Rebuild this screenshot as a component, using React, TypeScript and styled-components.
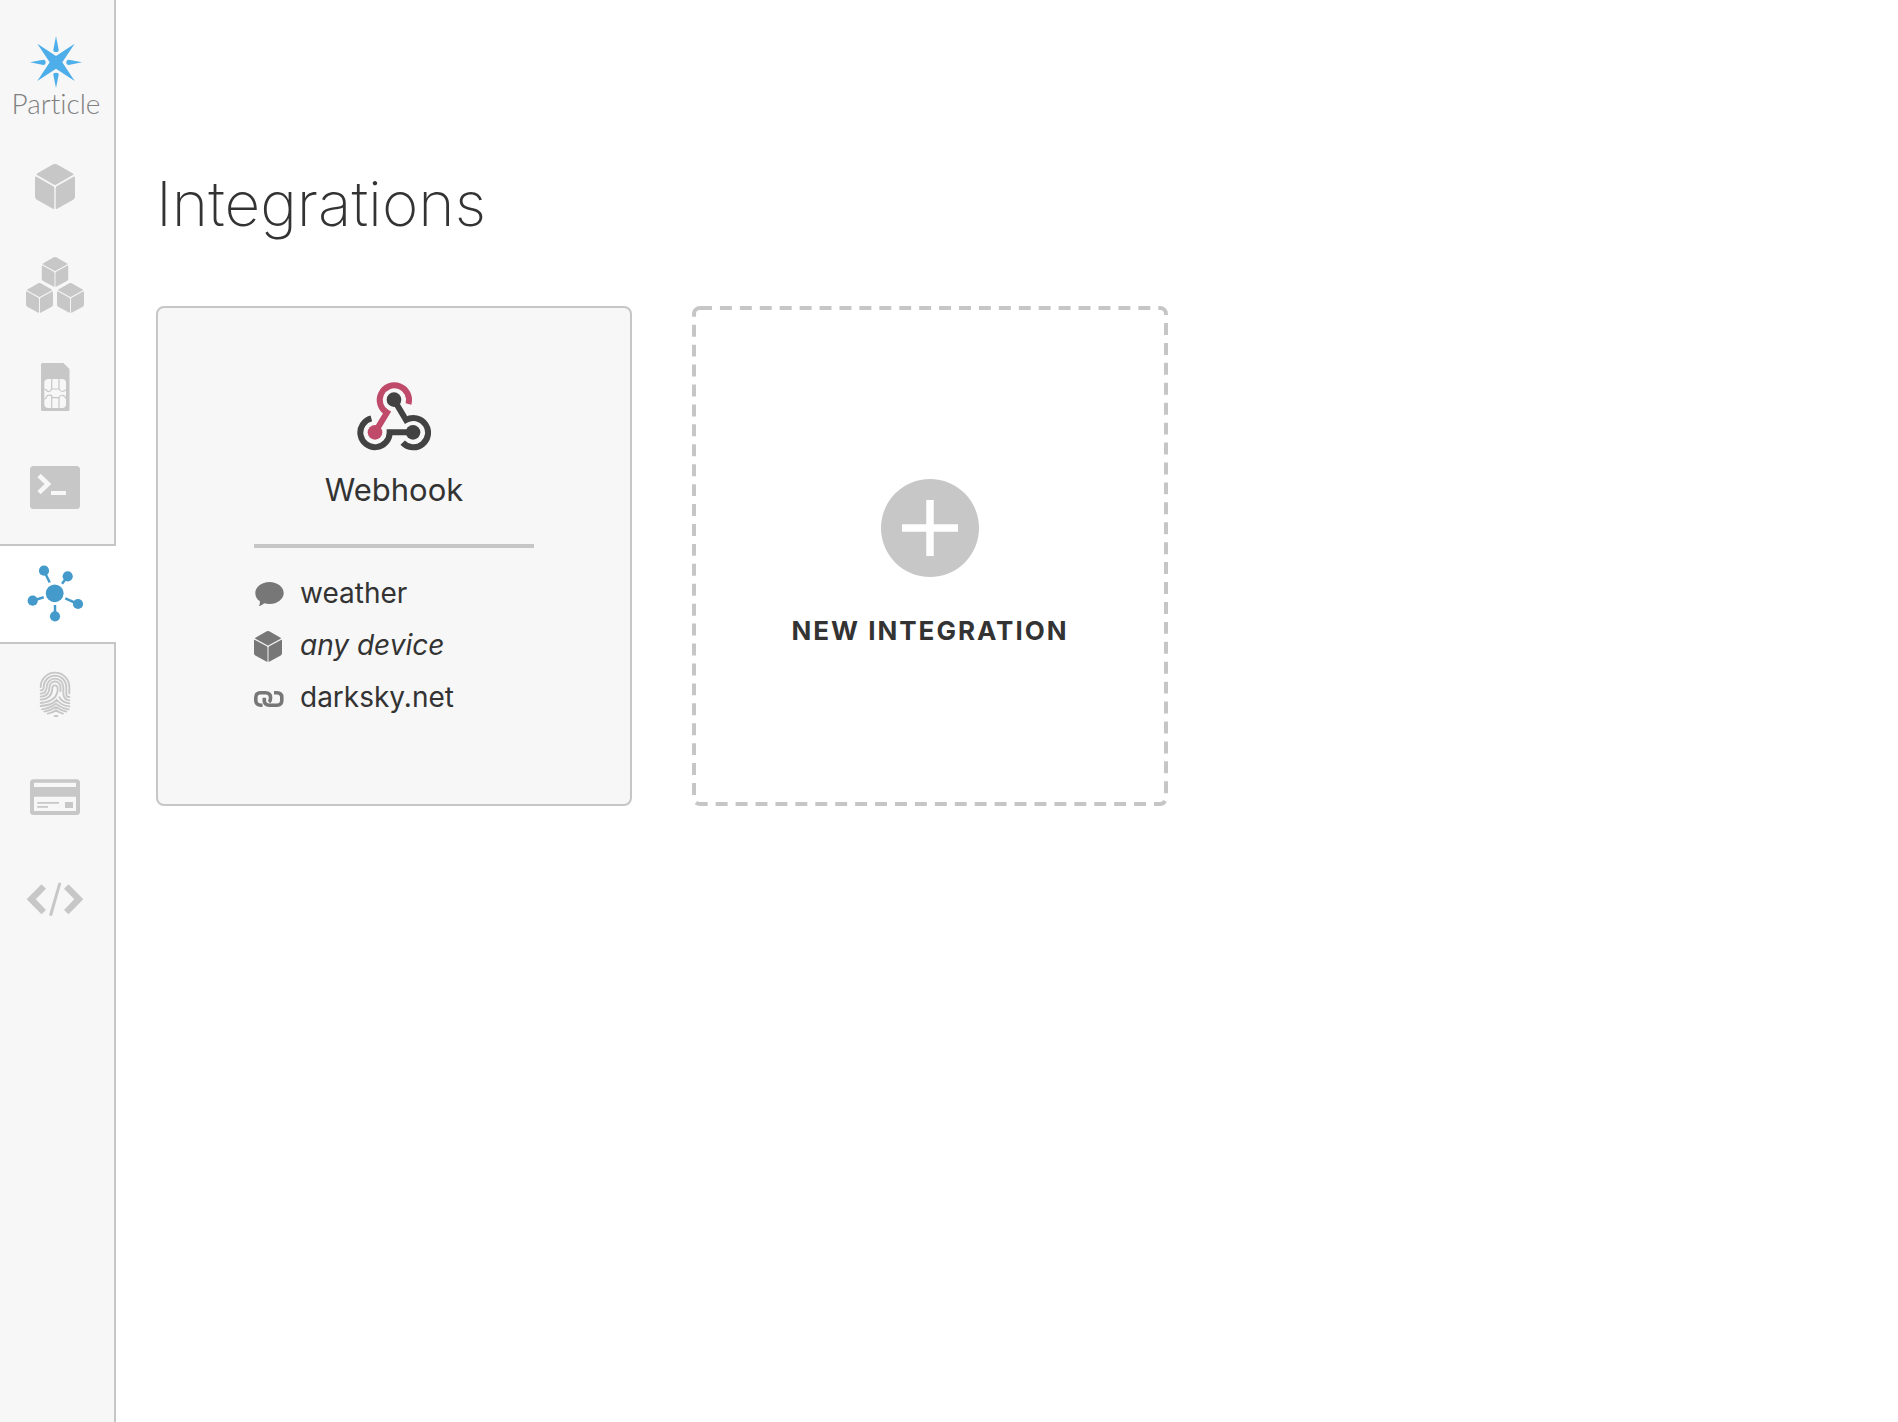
import React from 'react';
import styled, { createGlobalStyle, css } from 'styled-components';

const color = {
  line: '#c6c6c6',
  icon: '#c7c7c7',
  panel: '#f7f7f7',
  text: '#333333',
  muted: '#777777',
  active: '#449bcb',
  brand: '#4eaeea',
};

const GlobalStyle = createGlobalStyle`
  *, *::before, *::after { box-sizing: border-box; }
  body {
    margin: 0;
    background: #ffffff;
    color: ${color.text};
    font-family: Inter, "Open Sans", sans-serif;
  }
`;

const Page = styled.div`
  display: flex;
  min-height: 100vh;
`;

const Sidebar = styled.aside`
  display: flex;
  flex-direction: column;
  flex: none;
  width: 116px;
  background: ${color.panel};
  border-right: 2px solid ${color.line};
`;

const Brand = styled.a`
  display: flex;
  flex-direction: column;
  align-items: center;
  height: 136px;
  padding: 36px 2px 0 0;
  color: #808080;
  text-decoration: none;
`;

const BrandName = styled.span`
  font-family: Lato, sans-serif;
  font-size: 28px;
  font-weight: 300;
  font-variant-ligatures: none;
  line-height: 30px;
`;

const Nav = styled.nav`
  display: flex;
  flex-direction: column;
  gap: 2px;
`;

const NavItem = styled.a<{ $active?: boolean }>`
  display: flex;
  align-items: center;
  height: 100px;
  padding-left: 25px;
  color: ${color.icon};
  ${(p) =>
    p.$active &&
    css`
      margin-right: -2px;
      background: #ffffff;
      border: solid ${color.line};
      border-width: 2px 0;
      color: ${color.active};
    `}
`;

const NavSvg = styled.svg`
  width: 60px;
  height: 60px;
  overflow: visible;
`;

const Main = styled.main`
  flex: 1;
  min-width: 0;
  padding: 168px 40px 40px;
`;

const Title = styled.h1`
  margin: 0 0 66px;
  font-size: 62px;
  font-weight: 200;
  line-height: 72px;
`;

const CardGrid = styled.div`
  display: flex;
  flex-wrap: wrap;
  gap: 60px;
`;

const IntegrationCard = styled.a`
  display: flex;
  flex-direction: column;
  align-items: center;
  width: 476px;
  min-height: 500px;
  padding: 73px 40px;
  background: ${color.panel};
  border: 2px solid ${color.line};
  border-radius: 8px;
  color: inherit;
  text-decoration: none;
`;

const CardName = styled.h2`
  margin: 21px 0 36px;
  font-size: 31px;
  font-weight: 400;
  line-height: 36px;
`;

const Details = styled.ul`
  width: 280px;
  margin: 0;
  padding: 20px 0 0;
  border-top: 4px solid ${color.line};
  list-style: none;
`;

const Detail = styled.li<{ $italic?: boolean }>`
  display: flex;
  align-items: center;
  gap: 16px;
  height: 52px;
  font-size: 28px;
  font-style: ${(p) => (p.$italic ? 'italic' : 'normal')};
  line-height: 36px;
`;

const DetailText = styled.span`
  padding-bottom: 2px;
`;

const DetailSvg = styled.svg`
  width: 30px;
  height: 32px;
  color: ${color.muted};
`;

const NewCard = styled.button`
  position: relative;
  display: flex;
  flex-direction: column;
  align-items: center;
  justify-content: center;
  gap: 37px;
  width: 476px;
  min-height: 500px;
  padding: 14px 0 0;
  background: #ffffff;
  border: 0;
  border-radius: 8px;
  color: ${color.text};
  font-family: inherit;
  font-size: 26px;
  font-weight: 700;
  letter-spacing: 2px;
  line-height: 34px;
  text-transform: uppercase;
  cursor: pointer;
`;

const DashedOutline = styled.svg`
  position: absolute;
  inset: 0;
  width: 100%;
  height: 100%;
  pointer-events: none;

  rect {
    width: calc(100% - 4px);
    height: calc(100% - 4px);
    fill: none;
    stroke: ${color.line};
    stroke-width: 4px;
    stroke-dasharray: 12 8;
  }
`;

const CubeShape = ({ x = 0, y = 0, width, height }: { x?: number; y?: number; width: number; height: number }) => (
  <svg x={x} y={y} width={width} height={height} viewBox="0 0 40 46" preserveAspectRatio="none" fill="currentColor">
    <path d="M18.200 .5q1.800-1 3.600 0L38 10q1 .7 0 1.400L21 21.200q-1 .6-2 0L2 11.400Q1 10.700 2 10Z" />
    <path d="M0 14.200Q0 12.400 1.500 13.200L18.200 22.800Q19.300 23.500 19.300 24.800V45q0 1.200-1 .6L1.800 36.300Q0 35.200 0 33.400Z" />
    <path d="M40 14.200Q40 12.400 38.500 13.200L21.800 22.800Q20.700 23.500 20.700 24.800V45q0 1.200 1 .6L38.200 36.300Q40 35.200 40 33.400Z" />
  </svg>
);

const Logo = () => (
  <svg width="52" height="52" viewBox="90 48 156 156" fill={color.brand} aria-hidden="true">
    <path d="M112 71 168 108 224 71 187 127 224 183 168 146 112 183 149 127Z" />
    <path d="M168 48 176 89Q177 96 168 96 159 96 160 89Z" />
    <path d="M168 204 176 165Q177 158 168 158 159 158 160 165Z" />
    <path d="M90 127 130 119Q137 119 137 127 137 135 130 135Z" />
    <path d="M246 127 206 119Q199 119 199 127 199 135 206 135Z" />
  </svg>
);

const DeviceIcon = () => <CubeShape x={10} y={7.7} width={40} height={45.6} />;

const ProductsIcon = () => (
  <>
    <CubeShape x={16.5} y={-1} width={27} height={30} />
    <CubeShape x={1} y={25} width={27} height={30} />
    <CubeShape x={32} y={25} width={27} height={30} />
  </>
);

const SimIcon = () => (
  <>
    <path d="M17.500 3H38.500L44.500 9V49.500Q44.500 51 43 51H17.500Q16 51 16 49.500V4.500Q16 3 17.500 3Z" fill="currentColor" />
    <rect x="19.300" y="19" width="21.700" height="29" rx="4" fill={color.panel} />
    <g fill="none" stroke="currentColor" strokeWidth="1.200">
      <path d="M26.700 19V29M34 19V29M26.700 38V48M34 38V48" />
      <path d="M19.300 29.500H21Q22 32 24 31.500T26.700 29H34Q35.500 31.500 37.500 31.500T41 29.500" />
      <path d="M19.300 39Q21 39 21.500 37T25 35.200 26.700 37.700H34Q35 35 37.500 35.300T41 38.500" />
    </g>
  </>
);

const ConsoleIcon = () => (
  <>
    <rect x="5" y="4" width="50" height="43" rx="3.500" fill="currentColor" />
    <path d="M14 13.500 23 22 14 30.700" fill="none" stroke={color.panel} strokeWidth="4.600" />
    <rect x="26" y="29" width="15" height="4" fill={color.panel} />
  </>
);

const IntegrationsIcon = () => (
  <>
    <g fill="currentColor">
      <circle cx="29.700" cy="29.300" r="8.900" />
      <circle cx="19" cy="6.700" r="5.100" />
      <circle cx="42.700" cy="12.300" r="5.100" />
      <circle cx="7.700" cy="36.700" r="5.100" />
      <circle cx="53" cy="40" r="5.100" />
      <circle cx="30" cy="52.300" r="5.100" />
    </g>
    <path
      d="M19 6.700 24.700 18.500M42.700 12.300 37 19.700M7.700 36.700 18.700 33.200M53 40 40.300 34.400M30 52.300V41"
      stroke="currentColor"
      strokeWidth="2.500"
    />
  </>
);

const AuthIcon = () => (
  <g transform="translate(-25 -136) scale(.33333)" fill="none" stroke="currentColor" strokeWidth="5.600" strokeLinecap="round">
    <path d="M122 471A43 43 0 0 1 208 471V490" />
    <path d="M122 481Q131 482 131 471A34 34 0 0 1 199 471V494Q199 501 208 501" />
    <path d="M122 491Q140 490 140 471A25 25 0 0 1 190 471V490Q190 509 208 511" />
    <path d="M122 500Q148.500 499 148.500 471A16.500 16.500 0 0 1 181.500 471V484" />
    <path d="M122 509Q157 506 157 474A8 8 0 0 1 173 474Q175 513 122 519" />
    <path d="M178 502Q187 518 208 520" />
    <path d="M122 528Q155 526 170 510Q185 527 208 529" />
    <path d="M126 538Q150 535 168 521Q186 535 206 538" />
    <path d="M133 545Q152 542 168 531Q184 542 199 545" />
    <path d="M143 551Q155 549 168 541Q181 549 189 551" />
    <path d="M164 558H172" />
  </g>
);

const BillingIcon = () => (
  <>
    <rect x="5" y="11.300" width="50" height="35.700" rx="3.500" fill="currentColor" />
    <path d="M9 14.700H51V19H9ZM9 28.700H51V43H9Z" fill={color.panel} />
    <path d="M12.300 34H34V35.700H12.300ZM12.300 38H23V39.700H12.300ZM40 34H48V40H40Z" fill="currentColor" />
  </>
);

const CodeIcon = () => (
  <path
    d="M1.700 29.300 16.500 14.300 21 18.700 10.700 29.300 21 40 16.500 44.300ZM58.300 29.300 43.500 14.300 39 18.700 49.300 29.300 39 40 43.500 44.300ZM33.500 12.500 36.300 13.200 27 46 24 45.300Z"
    fill="currentColor"
  />
);

const WebhookIcon = () => (
  <svg width="74" height="70" viewBox="171 62 222 210" fill="none" strokeWidth="18" aria-hidden="true">
    <g stroke="#424242">
      <path d="M282 118 318 179A44 44 0 1 1 308 247" />
      <path d="M340 216H269A44 44 0 1 1 214 174" />
    </g>
    <path d="M325.500 131A44 44 0 1 0 261 157L225 216" stroke="#bf4a69" />
    <circle cx="282" cy="118" r="22" fill="#424242" />
    <circle cx="339" cy="216" r="22" fill="#424242" />
    <circle cx="225" cy="216" r="22" fill="#bf4a69" />
  </svg>
);

const EventIcon = () => (
  <path
    d="M15.500 4C23.500 4 29.700 9 29.700 15S23.500 26 15.500 26C13.500 26 11.800 25.700 10.200 25.200 8.500 26.700 7 27.600 5 28 5.700 26.800 6 25 5.900 23.300 3 21.300 1.300 18.400 1.300 15 1.300 9 7.500 4 15.500 4Z"
    fill="currentColor"
  />
);

const LinkIcon = () => (
  <g fill="none" stroke="currentColor" strokeWidth="3.600">
    <path d="M8.500 23.200H7Q1.800 23.200 1.800 18.500V15.500Q1.800 10.800 6.500 10.800H11.500Q16.500 10.800 16.500 15.500V16.500Q16.500 19 15 20.200" />
    <path d="M20 10.800H23Q27.800 10.800 27.800 15.500V18.500Q27.800 23.200 23 23.200H15.500Q10.300 23.200 10.300 18.500V15.800" />
  </g>
);

const navItems = [
  { label: 'Devices', Icon: DeviceIcon },
  { label: 'Products', Icon: ProductsIcon },
  { label: 'SIM cards', Icon: SimIcon },
  { label: 'Console', Icon: ConsoleIcon },
  { label: 'Integrations', Icon: IntegrationsIcon, active: true },
  { label: 'Authentication', Icon: AuthIcon },
  { label: 'Billing', Icon: BillingIcon },
  { label: 'Web IDE', Icon: CodeIcon },
];

export default function App() {
  return (
    <Page>
      <GlobalStyle />
      <Sidebar>
        <Brand href="#">
          <Logo />
          <BrandName>Particle</BrandName>
        </Brand>
        <Nav aria-label="Main">
          {navItems.map(({ label, Icon, active }) => (
            <NavItem key={label} href="#" aria-label={label} $active={active} aria-current={active ? 'page' : undefined}>
              <NavSvg viewBox="0 0 60 60" aria-hidden="true">
                <Icon />
              </NavSvg>
            </NavItem>
          ))}
        </Nav>
      </Sidebar>
      <Main>
        <Title>Integrations</Title>
        <CardGrid>
          <IntegrationCard href="#">
            <WebhookIcon />
            <CardName>Webhook</CardName>
            <Details>
              <Detail>
                <DetailSvg viewBox="0 0 30 32" aria-hidden="true">
                  <EventIcon />
                </DetailSvg>
                <DetailText>weather</DetailText>
              </Detail>
              <Detail $italic>
                <DetailSvg viewBox="0 0 30 32" aria-hidden="true">
                  <CubeShape y={1} width={28} height={31} />
                </DetailSvg>
                <DetailText>any device</DetailText>
              </Detail>
              <Detail>
                <DetailSvg viewBox="0 0 30 32" aria-hidden="true">
                  <LinkIcon />
                </DetailSvg>
                <DetailText>darksky.net</DetailText>
              </Detail>
            </Details>
          </IntegrationCard>
          <NewCard type="button">
            <DashedOutline aria-hidden="true">
              <rect x="2" y="2" rx="6" pathLength={1932} />
            </DashedOutline>
            <svg width="98" height="98" viewBox="0 0 98 98" aria-hidden="true">
              <circle cx="49" cy="49" r="49" fill={color.icon} />
              <path d="M21 49H77M49 21V77" stroke="#ffffff" strokeWidth="7.500" />
            </svg>
            New integration
          </NewCard>
        </CardGrid>
      </Main>
    </Page>
  );
}
